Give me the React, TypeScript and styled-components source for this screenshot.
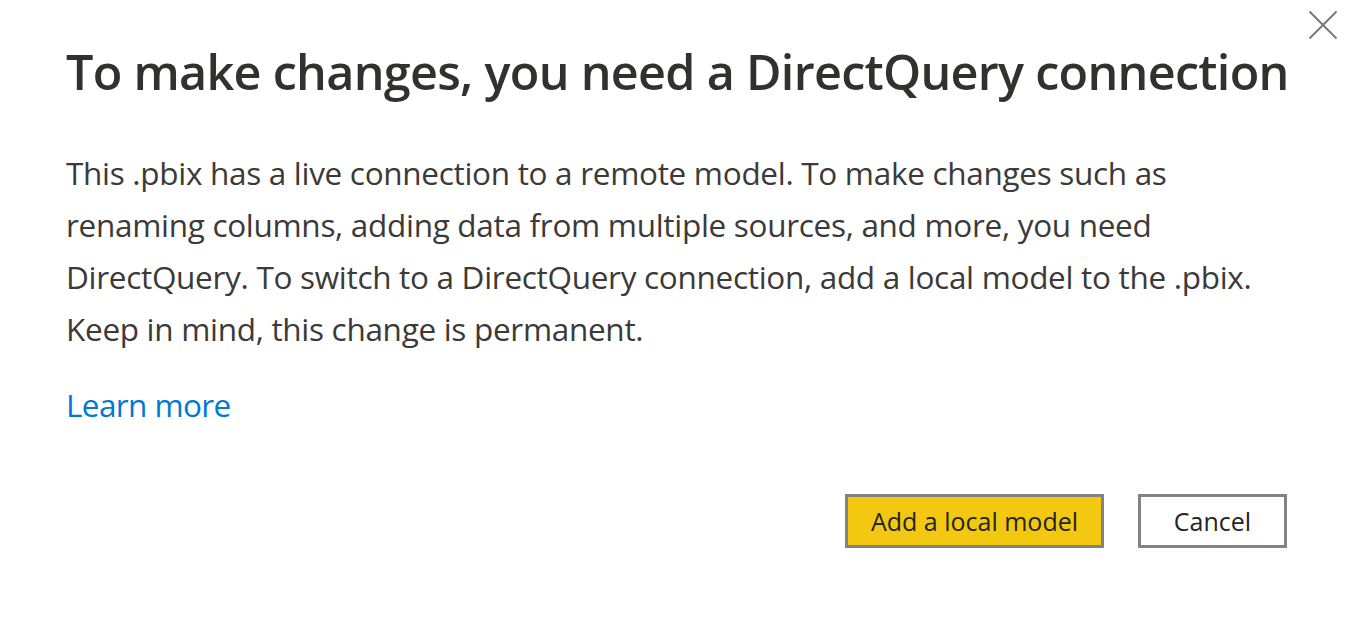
import React from 'react'
import styled, { createGlobalStyle } from 'styled-components'

const GlobalStyle = createGlobalStyle`
    html, body {
        margin: 0;
        padding: 0;
        background: #fff;
    }
    body {
        font-family: 'Open Sans', 'Noto Sans', sans-serif;
    }
`

const Dialog = styled.div`
    position: relative;
    width: 1352px;
    height: 620px;
    box-sizing: border-box;
    padding: 39px 65px 0 66px;
    display: flex;
    flex-direction: column;
    background: #fff;
    overflow: hidden;
`

const CloseButton = styled.button`
    position: absolute;
    top: 9px;
    right: 13px;
    width: 32px;
    height: 32px;
    padding: 0;
    border: none;
    background: transparent;
    display: flex;
    align-items: center;
    justify-content: center;
    cursor: pointer;
`

const Title = styled.h1`
    margin: 0;
    font-size: 48.5px;
    font-weight: 600;
    letter-spacing: -0.7px;
    color: #323130;
    line-height: 64px;
    white-space: nowrap;
`

const Body = styled.p`
    margin: 44px 0 0;
    font-size: 31.5px;
    letter-spacing: -0.3px;
    line-height: 52px;
    color: #3b3a39;
    white-space: nowrap;
`

const LearnMore = styled.a`
    margin-top: 24px;
    font-size: 31.5px;
    letter-spacing: -0.6px;
    line-height: 52px;
    color: #0078d4;
    text-decoration: none;
    align-self: flex-start;
`

const Actions = styled.div`
    display: flex;
    justify-content: flex-end;
    gap: 34px;
    margin-top: 63px;
`

const Button = styled.button<{ $primary?: boolean }>`
    width: ${(p) => (p.$primary ? '259px' : '149px')};
    height: 54px;
    box-sizing: border-box;
    padding: 0;
    border: 3px solid #838383;
    background: ${(p) => (p.$primary ? '#f2c811' : '#fff')};
    color: #252423;
    font-family: inherit;
    font-size: 25px;
    line-height: 34px;
    cursor: pointer;
`

export default function App() {
    return (
        <>
            <GlobalStyle />
            <Dialog>
                <CloseButton aria-label="Close">
                    <svg width="30" height="30" viewBox="0 0 30 30">
                        <path d="M1.5 1.5 L28.5 28.5 M28.5 1.5 L1.5 28.5" stroke="#7a7a7a" strokeWidth="2" fill="none" />
                    </svg>
                </CloseButton>
                <Title>To make changes, you need a DirectQuery connection</Title>
                <Body>
                    This .pbix has a live connection to a remote model. To make changes such as
                    <br />
                    renaming columns, adding data from multiple sources, and more, you need
                    <br />
                    DirectQuery. To switch to a DirectQuery connection, add a local model to the .pbix.
                    <br />
                    Keep in mind, this change is permanent.
                </Body>
                <LearnMore href="#">Learn more</LearnMore>
                <Actions>
                    <Button $primary>Add a local model</Button>
                    <Button>Cancel</Button>
                </Actions>
            </Dialog>
        </>
    )
}
